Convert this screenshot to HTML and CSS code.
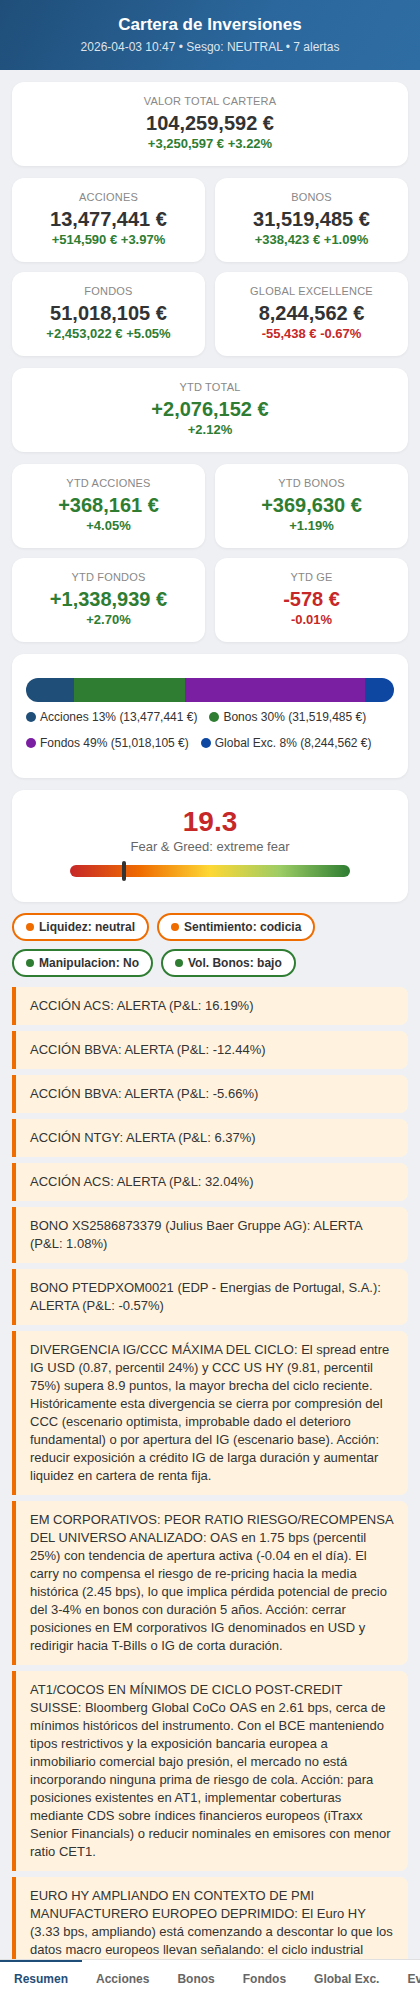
FILE: index.html
```html
<!DOCTYPE html>
<html lang="es">
<head>
<meta charset="utf-8">
<title>Cartera de Inversiones</title>
<link rel="stylesheet" href="styles.css">
</head>
<body>
<header class="header">
  <h1 class="header-title">Cartera de Inversiones</h1>
  <div class="header-sub">2026-04-03 10:47 • Sesgo: NEUTRAL • 7 alertas</div>
</header>

<main class="content">
  <section class="card stat">
    <div class="stat-label">Valor Total Cartera</div>
    <div class="stat-value">104,259,592 €</div>
    <div class="stat-change pos">+3,250,597 € +3.22%</div>
  </section>

  <section class="grid">
    <div class="card stat">
      <div class="stat-label">Acciones</div>
      <div class="stat-value">13,477,441 €</div>
      <div class="stat-change pos">+514,590 € +3.97%</div>
    </div>
    <div class="card stat">
      <div class="stat-label">Bonos</div>
      <div class="stat-value">31,519,485 €</div>
      <div class="stat-change pos">+338,423 € +1.09%</div>
    </div>
    <div class="card stat">
      <div class="stat-label">Fondos</div>
      <div class="stat-value">51,018,105 €</div>
      <div class="stat-change pos">+2,453,022 € +5.05%</div>
    </div>
    <div class="card stat">
      <div class="stat-label">Global Excellence</div>
      <div class="stat-value">8,244,562 €</div>
      <div class="stat-change neg">-55,438 € -0.67%</div>
    </div>
  </section>

  <section class="card stat">
    <div class="stat-label">YTD Total</div>
    <div class="stat-value pos">+2,076,152 €</div>
    <div class="stat-change pos">+2.12%</div>
  </section>

  <section class="grid">
    <div class="card stat">
      <div class="stat-label">YTD Acciones</div>
      <div class="stat-value pos">+368,161 €</div>
      <div class="stat-change pos">+4.05%</div>
    </div>
    <div class="card stat">
      <div class="stat-label">YTD Bonos</div>
      <div class="stat-value pos">+369,630 €</div>
      <div class="stat-change pos">+1.19%</div>
    </div>
    <div class="card stat">
      <div class="stat-label">YTD Fondos</div>
      <div class="stat-value pos">+1,338,939 €</div>
      <div class="stat-change pos">+2.70%</div>
    </div>
    <div class="card stat">
      <div class="stat-label">YTD GE</div>
      <div class="stat-value neg">-578 €</div>
      <div class="stat-change neg">-0.01%</div>
    </div>
  </section>

  <section class="card alloc">
    <div class="alloc-bar">
      <div class="seg c-acc" style="width:12.93%"></div>
      <div class="seg c-bon" style="width:30.23%"></div>
      <div class="seg c-fon" style="width:48.93%"></div>
      <div class="seg c-ge" style="width:7.91%"></div>
    </div>
    <div class="legend">
      <span class="legend-item"><span class="dot c-acc"></span>Acciones 13% (13,477,441 €)</span>
      <span class="legend-item"><span class="dot c-bon"></span>Bonos 30% (31,519,485 €)</span>
      <span class="legend-item"><span class="dot c-fon"></span>Fondos 49% (51,018,105 €)</span>
      <span class="legend-item"><span class="dot c-ge"></span>Global Exc. 8% (8,244,562 €)</span>
    </div>
  </section>

  <section class="card fg">
    <div class="fg-value">19.3</div>
    <div class="fg-label">Fear &amp; Greed: extreme fear</div>
    <div class="fg-bar">
      <div class="fg-marker" style="left:19.3%"></div>
    </div>
  </section>

  <section class="chips">
    <span class="chip warn"><span class="chip-dot"></span>Liquidez: neutral</span>
    <span class="chip warn"><span class="chip-dot"></span>Sentimiento: codicia</span>
    <span class="chip ok"><span class="chip-dot"></span>Manipulacion: No</span>
    <span class="chip ok"><span class="chip-dot"></span>Vol. Bonos: bajo</span>
  </section>

  <section class="alerts">
    <div class="alert">ACCIÓN ACS: ALERTA (P&amp;L: 16.19%)</div>
    <div class="alert">ACCIÓN BBVA: ALERTA (P&amp;L: -12.44%)</div>
    <div class="alert">ACCIÓN BBVA: ALERTA (P&amp;L: -5.66%)</div>
    <div class="alert">ACCIÓN NTGY: ALERTA (P&amp;L: 6.37%)</div>
    <div class="alert">ACCIÓN ACS: ALERTA (P&amp;L: 32.04%)</div>
    <div class="alert">BONO XS2586873379 (Julius Baer Gruppe AG): ALERTA (P&amp;L: 1.08%)</div>
    <div class="alert">BONO PTEDPXOM0021 (EDP - Energias de Portugal, S.A.): ALERTA (P&amp;L: -0.57%)</div>
    <div class="alert">DIVERGENCIA IG/CCC MÁXIMA DEL CICLO: El spread entre IG USD (0.87, percentil 24%) y CCC US HY (9.81, percentil 75%) supera 8.9 puntos, la mayor brecha del ciclo reciente. Históricamente esta divergencia se cierra por compresión del CCC (escenario optimista, improbable dado el deterioro fundamental) o por apertura del IG (escenario base). Acción: reducir exposición a crédito IG de larga duración y aumentar liquidez en cartera de renta fija.</div>
    <div class="alert">EM CORPORATIVOS: PEOR RATIO RIESGO/RECOMPENSA DEL UNIVERSO ANALIZADO: OAS en 1.75 bps (percentil 25%) con tendencia de apertura activa (-0.04 en el día). El carry no compensa el riesgo de re-pricing hacia la media histórica (2.45 bps), lo que implica pérdida potencial de precio del 3-4% en bonos con duración 5 años. Acción: cerrar posiciones en EM corporativos IG denominados en USD y redirigir hacia T-Bills o IG de corta duración.</div>
    <div class="alert">AT1/COCOS EN MÍNIMOS DE CICLO POST-CREDIT SUISSE: Bloomberg Global CoCo OAS en 2.61 bps, cerca de mínimos históricos del instrumento. Con el BCE manteniendo tipos restrictivos y la exposición bancaria europea a inmobiliario comercial bajo presión, el mercado no está incorporando ninguna prima de riesgo de cola. Acción: para posiciones existentes en AT1, implementar coberturas mediante CDS sobre índices financieros europeos (iTraxx Senior Financials) o reducir nominales en emisores con menor ratio CET1.</div>
    <div class="alert">EURO HY AMPLIANDO EN CONTEXTO DE PMI MANUFACTURERO EUROPEO DEPRIMIDO: El Euro HY (3.33 bps, ampliando) está comenzando a descontar lo que los datos macro europeos llevan señalando: el ciclo industrial europeo continúa en contracción y los emisores high yield con exposición manufacturera son los más vulnerables. Acción: reducir exposición a HY europeo cíclico.</div>
  </section>
</main>

<nav class="tabbar">
  <a class="tab active">Resumen</a>
  <a class="tab">Acciones</a>
  <a class="tab">Bonos</a>
  <a class="tab">Fondos</a>
  <a class="tab">Global Exc.</a>
  <a class="tab">Eventos</a>
</nav>
</body>
</html>
```
FILE: styles.css
```css
* { box-sizing: border-box; }

html, body {
  margin: 0;
  padding: 0;
}

body {
  font-family: "Liberation Sans", Arial, Helvetica, sans-serif;
  background: #eef0f4;
  color: #333;
  padding-bottom: 60px;
}

.header {
  background: linear-gradient(120deg, #1f4e79 0%, #2b679c 60%, #2e6da3 100%);
  color: #fff;
  text-align: center;
  padding: 15px 16px 16px;
  height: 70px;
}

.header-title {
  margin: 0;
  font-size: 17px;
  line-height: 20px;
  font-weight: 700;
}

.header-sub {
  margin-top: 5px;
  font-size: 12px;
  line-height: 14px;
  color: rgba(255, 255, 255, 0.85);
}

.content {
  padding: 12px 12px 0;
}

.card {
  background: #fff;
  border-radius: 12px;
  box-shadow: 0 1px 3px rgba(0, 0, 0, 0.06);
  margin-bottom: 12px;
}

.grid {
  display: grid;
  grid-template-columns: 1fr 1fr;
  gap: 10px;
  margin-bottom: 12px;
}

.grid .card {
  margin-bottom: 0;
}

.stat {
  text-align: center;
  padding: 13px 8px 14px;
  height: 84px;
}

.stat-label {
  font-size: 11px;
  line-height: 13px;
  text-transform: uppercase;
  letter-spacing: 0.2px;
  color: #888;
}

.stat-value {
  margin-top: 3px;
  font-size: 20px;
  line-height: 24px;
  font-weight: 700;
  color: #333;
}

.stat-change {
  margin-top: 1px;
  font-size: 13px;
  line-height: 16px;
  font-weight: 700;
}

.pos { color: #2e7d32; }
.neg { color: #c62828; }

.alloc {
  padding: 24px 14px 28px;
}

.alloc-bar {
  display: flex;
  height: 24px;
  border-radius: 12px;
  overflow: hidden;
}

.seg { height: 100%; }

.c-acc { background: #1f4e79; }
.c-bon { background: #2e7d32; }
.c-fon { background: #7b1fa2; }
.c-ge  { background: #0d47a1; }

.legend {
  display: flex;
  flex-wrap: wrap;
  gap: 12px 12px;
  margin-top: 8px;
  font-size: 12px;
  line-height: 14px;
  color: #333;
}

.legend-item {
  display: inline-flex;
  align-items: center;
  gap: 4px;
}

.dot {
  display: inline-block;
  width: 10px;
  height: 10px;
  border-radius: 50%;
}

.fg {
  padding: 16px 14px 25px;
  text-align: center;
  margin-bottom: 11px;
}

.fg-value {
  font-size: 28px;
  line-height: 32px;
  font-weight: 700;
  color: #c62828;
}

.fg-label {
  margin-top: 1px;
  font-size: 13px;
  line-height: 16px;
  color: #666;
}

.fg-bar {
  position: relative;
  width: 280px;
  height: 12px;
  margin: 10px auto 0;
  border-radius: 6px;
  background: linear-gradient(90deg, #c62828 0%, #ef6c00 25%, #fdd835 50%, #9ccc65 75%, #2e7d32 100%);
}

.fg-marker {
  position: absolute;
  top: -4px;
  width: 4px;
  height: 20px;
  margin-left: -2px;
  background: #333;
  border-radius: 2px;
}

.chips {
  display: flex;
  flex-wrap: wrap;
  gap: 8px;
  margin-bottom: 10px;
}

.chip {
  display: inline-flex;
  align-items: center;
  gap: 5px;
  background: #fff;
  border: 2px solid;
  border-radius: 14px;
  padding: 4px 12px;
  font-size: 12px;
  line-height: 16px;
  font-weight: 700;
  color: #333;
}

.chip-dot {
  width: 8px;
  height: 8px;
  border-radius: 50%;
}

.chip.warn { border-color: #ef6c00; }
.chip.warn .chip-dot { background: #ef6c00; }
.chip.ok { border-color: #2e7d32; }
.chip.ok .chip-dot { background: #2e7d32; }

.alerts {
  display: flex;
  flex-direction: column;
  gap: 6px;
}

.alert {
  background: #fff3e0;
  border-left: 4px solid #ef6c00;
  border-radius: 0 8px 8px 0;
  padding: 10px 14px;
  font-size: 13px;
  line-height: 18px;
  color: #333;
}

.tabbar {
  position: fixed;
  left: 0;
  right: 0;
  bottom: 0;
  height: 38px;
  display: flex;
  background: #fff;
  border-top: 1px solid #e0e0e0;
  overflow-x: auto;
  white-space: nowrap;
  scrollbar-width: none;
}

.tab {
  flex: 0 0 auto;
  padding: 0 14px;
  font-size: 12px;
  font-weight: 700;
  line-height: 34px;
  color: #666;
  border-top: 3px solid transparent;
  margin-top: -1px;
}

.tab.active {
  color: #1f4e79;
  border-top-color: #1f4e79;
}
```
